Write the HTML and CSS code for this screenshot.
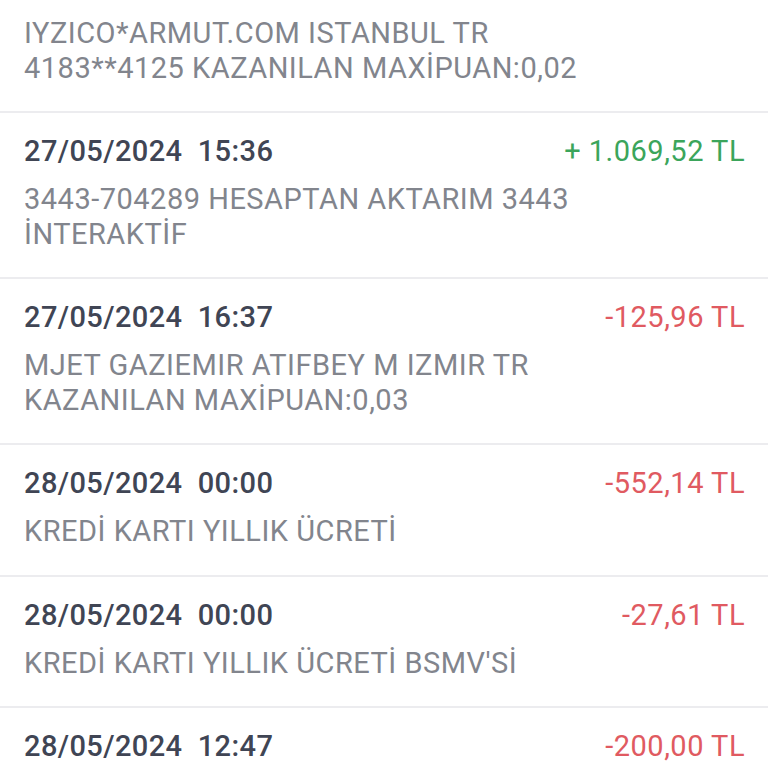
FILE: index.html
```html
<!DOCTYPE html>
<html lang="tr">
<head>
    <meta charset="UTF-8">
    <meta name="viewport" content="width=device-width, initial-scale=1.0">
    <title>Hesap Hareketleri</title>
    <link rel="stylesheet" href="styles.css">
</head>
<body>

    <div class="list">
        <div class="row partial">
            <div class="desc">IYZICO*ARMUT.COM ISTANBUL TR<br>4183**4125 KAZANILAN MAXİPUAN:0,02</div>
        </div>

        <div class="row">
            <div class="head">
                <span class="date">27/05/2024  15:36</span>
                <span class="amount plus">+ 1.069,52 TL</span>
            </div>
            <div class="desc">3443-704289 HESAPTAN AKTARIM 3443<br>İNTERAKTİF</div>
        </div>

        <div class="row">
            <div class="head">
                <span class="date">27/05/2024  16:37</span>
                <span class="amount minus">-125,96 TL</span>
            </div>
            <div class="desc">MJET GAZIEMIR ATIFBEY M IZMIR TR<br>KAZANILAN MAXİPUAN:0,03</div>
        </div>

        <div class="row">
            <div class="head">
                <span class="date">28/05/2024  00:00</span>
                <span class="amount minus">-552,14 TL</span>
            </div>
            <div class="desc">KREDİ KARTI YILLIK ÜCRETİ</div>
        </div>

        <div class="row">
            <div class="head">
                <span class="date">28/05/2024  00:00</span>
                <span class="amount minus">-27,61 TL</span>
            </div>
            <div class="desc">KREDİ KARTI YILLIK ÜCRETİ BSMV'Sİ</div>
        </div>

        <div class="row">
            <div class="head">
                <span class="date">28/05/2024  12:47</span>
                <span class="amount minus">-200,00 TL</span>
            </div>
        </div>
    </div>

</body>
</html>
```

FILE: styles.css
```css
body {
    font-family: Roboto, "Liberation Sans", sans-serif;
    background: #ffffff;
    margin: 0;
    height: 768px;
    overflow: hidden;
}
.list {
    display: flex;
    flex-direction: column;
}
.row {
    padding: 20px 23px 25px 24px;
    border-bottom: 2px solid #ececef;
}
.row:first-child {
    padding-top: 16px;
}
.row:nth-child(4) {
    padding-bottom: 26px;
}
.head {
    display: flex;
    justify-content: space-between;
    align-items: baseline;
    line-height: 36px;
    margin-bottom: 13px;
}
.date {
    font-size: 29px;
    font-weight: 500;
    letter-spacing: 0.4px;
    color: #404554;
    white-space: pre;
}
.amount {
    font-size: 29px;
    letter-spacing: 0.5px;
}
.amount.plus {
    color: #3ba55b;
}
.amount.minus {
    color: #e05a61;
}
.desc {
    font-size: 29px;
    line-height: 35px;
    letter-spacing: 0.5px;
    color: #82858d;
}
```
